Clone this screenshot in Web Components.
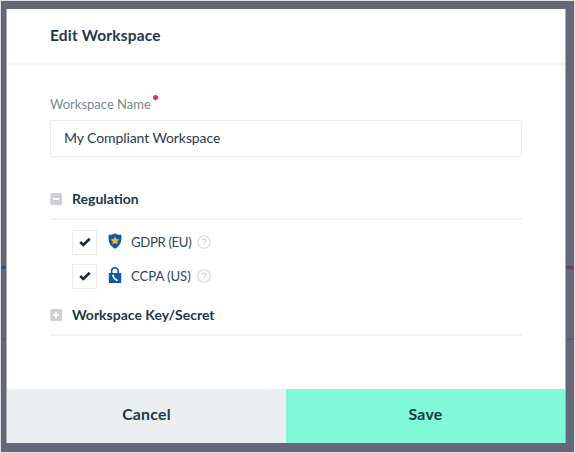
<!DOCTYPE html>
<html lang="en">
<head>
<meta charset="utf-8">
<title>Edit Workspace</title>
<style>
html,body{margin:0;height:100%}
body{background:#dedfe1;font-family:Lato,"Open Sans",sans-serif;color:#1b394c;overflow:hidden}
</style>
</head>
<body>
<workspace-dialog></workspace-dialog>
<script>
const define = (name, html) => customElements.define(name, class extends HTMLElement {
  constructor() {
    super();
    const t = document.createElement('template');
    t.innerHTML = html;
    this.attachShadow({mode: 'open'}).append(t.content.cloneNode(true));
  }
});

define('fold-icon', `
<style>
:host{display:block;width:12px;height:12px}
svg{display:block}
.v{display:none}
:host([closed]) .v{display:block}
</style>
<svg width="12" height="12" viewBox="0 0 12 12"><rect x=".3" width="11.700" height="12" rx="1.5" fill="#cdd0d2"/><path d="M3 6H9" stroke="#fff" stroke-width="1.8"/><path class="v" d="M6 3V9" stroke="#fff" stroke-width="1.8"/></svg>`);

define('check-box', `
<style>
:host{display:flex;box-sizing:border-box;width:25px;height:25px;border:1px solid #eaebec;align-items:center;justify-content:center}
</style>
<svg width="12" height="10" viewBox="0 0 12 10"><path d="M1.2 5.1L4.3 8L10.7 1.8" fill="none" stroke="#12303f" stroke-width="2.7"/></svg>`);

define('shield-icon', `
<style>:host{display:block;width:14px;height:16px}svg{display:block}</style>
<svg width="14" height="16" viewBox="0 0 14 16"><path d="M7 .3C5.3 1.6 3 2 .7 1.8C.1 7.8 1 12.7 7 15.8C13 12.7 13.9 7.8 13.3 1.8C11 2 8.700 1.600 7 .3Z" fill="#0e57ac"/><path d="M7 3.200L8.350 6.050L11.400 6.400L9.150 8.550L9.750 11.600L7 10.100L4.250 11.600L4.850 8.550L2.600 6.400L5.650 6.050Z" fill="#fcb61c"/></svg>`);

define('lock-icon', `
<style>:host{display:block;width:14px;height:16px}svg{display:block}</style>
<svg width="14" height="16" viewBox="0 0 14 16"><path d="M3.600 7V4A3.300 3.200 0 0 1 10.200 4V7" fill="none" stroke="#0e57ac" stroke-width="1.600"/><rect x=".8" y="6" width="12.400" height="10" rx=".6" fill="#0e57ac"/><path d="M4.300 7.700L5.700 7.500L6.200 9.500L7.100 11.200L8.600 11.700L9.900 13.300L8.800 14.200L7 13.100L5.200 11.200L4.200 9Z" fill="#fff"/></svg>`);

define('help-icon', `
<style>
:host{display:block;width:14px;height:14px}
svg{display:block}
</style>
<svg width="14" height="14" viewBox="0 0 14 14" fill="none" stroke="#d2d5d7"><circle cx="7" cy="7" r="6.200" stroke-width="1.100"/><path d="M5.200 5.500C5.300 3.300 8.800 3.400 8.700 5.400C8.700 6.600 7 6.700 7 8.200M7 9.300V10.600" stroke-width="1.300"/></svg>`);

define('fold-section', `
<style>
:host{display:block}
header{display:flex;align-items:center;gap:10px;height:39px;padding-bottom:1px;border-bottom:2px solid #f2f3f3;box-sizing:border-box;font-weight:700;font-size:14px;line-height:20px}
</style>
<header><slot name="icon"></slot><slot name="title"></slot></header><slot></slot>`);

define('option-row', `
<style>
:host{display:flex;align-items:center;height:34px;padding-left:22px}
.icon{display:block;margin:-3px 9px 0 11px}
.label{width:60px;font-size:13.2px;line-height:20px;color:#2c4757;letter-spacing:var(--track,0);margin-right:6px;white-space:nowrap}
</style>
<check-box></check-box><span class="icon"><slot name="icon"></slot></span><span class="label"><slot></slot></span><help-icon></help-icon>`);

define('text-field', `
<style>
:host{display:block}
.label{display:flex;font-size:13px;line-height:18px;color:#7a878c;letter-spacing:0}
i{width:5px;height:5px;border-radius:50%;background:#f32155;margin:0 0 0 2px}
.box{box-sizing:border-box;height:37px;margin-top:7px;border:1px solid #eaebec;border-radius:2px;padding:0 13px 2px;display:flex;align-items:center;font-size:14px;color:#1f3c4c;letter-spacing:-.09px}
</style>
<div class="label"><slot name="label"></slot><i></i></div><div class="box"><slot></slot></div>`);

define('action-button', `
<style>
:host{display:flex;flex:1;align-items:center;justify-content:center;box-sizing:border-box;padding-bottom:5px;font-weight:700;font-size:15.8px;letter-spacing:.25px;background:#eaeef1}
:host([primary]){background:#80f8da;color:#123b40}
</style><slot></slot>`);

define('workspace-dialog', `
<style>
:host{display:grid;grid-template-rows:1fr;box-sizing:border-box;width:575px;height:453px;padding:1px}
.shade{box-sizing:border-box;padding:8px 8px 9px 5px;display:grid;
background:linear-gradient(#5b5c6f,#5b5c6f) 0 337px/100% 2px no-repeat,linear-gradient(90deg,#285886 0 50%,#663e69 50%) 0 265px/100% 3px no-repeat,#656678}
.modal{display:flex;flex-direction:column;box-sizing:border-box;border:1px solid #aaabb5;border-width:0 1px 0 1px;background:#fff;background-clip:padding-box}
.head{height:56px;box-sizing:border-box;border-bottom:2px solid #f2f3f3;display:flex;align-items:center;padding-left:43px;padding-bottom:2px;font-weight:700;font-size:15.5px;letter-spacing:.18px}
.body{flex:1;padding:30px 43px 0}
text-field{margin-bottom:24px}
.rows{padding-top:5px;padding-bottom:4px}
footer{display:flex;height:54px}
</style>
<div class="shade"><div class="modal">
<div class="head">Edit Workspace</div>
<div class="body">
<text-field><span slot="label">Workspace Name</span>My Compliant Workspace</text-field>
<fold-section><fold-icon slot="icon"></fold-icon><span slot="title">Regulation</span>
<div class="rows">
<option-row style="--track:-.36px"><shield-icon slot="icon"></shield-icon>GDPR (EU)</option-row>
<option-row style="--track:-.1px"><lock-icon slot="icon"></lock-icon>CCPA (US)</option-row>
</div></fold-section>
<fold-section><fold-icon closed slot="icon"></fold-icon><span slot="title">Workspace Key/Secret</span></fold-section>
</div>
<footer><action-button>Cancel</action-button><action-button primary>Save</action-button></footer>
</div></div>`);
</script>
</body>
</html>
